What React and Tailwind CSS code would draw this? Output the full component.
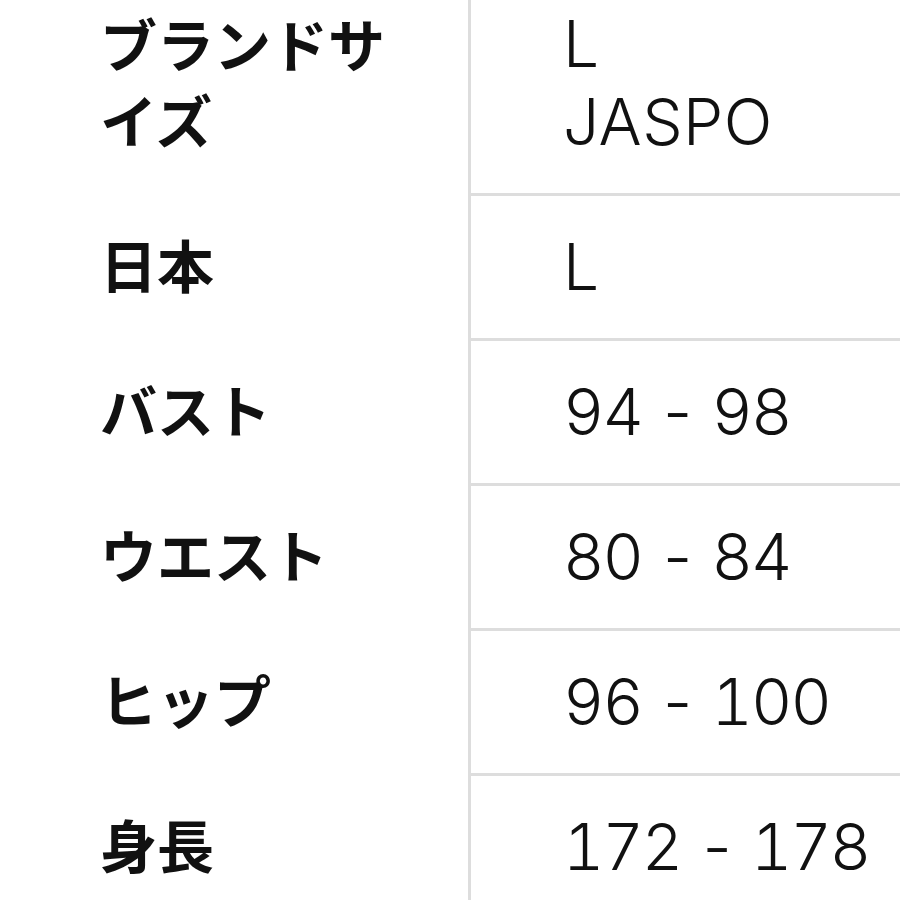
import React from "react";

const ROWS = [
  { label: "ブランドサイズ", values: ["L", "JASPO"], h: "h-[221px]" },
  { label: "日本", values: ["L"], h: "h-[145px]" },
  { label: "バスト", values: ["94 - 98"], h: "h-[145px]" },
  { label: "ウエスト", values: ["80 - 84"], h: "h-[145px]" },
  { label: "ヒップ", values: ["96 - 100"], h: "h-[145px]" },
  { label: "身長", values: ["172 - 178"], h: "h-[145px]" },
];

export default function App() {
  return (
    <div className="w-[900px] h-[900px] overflow-hidden bg-white text-[#111]">
      <div className="mt-[-28px]">
        {ROWS.map((row, i) => (
          <div key={i} className={`flex ${row.h}`}>
            {/* label */}
            <div className="w-[468px] shrink-0 flex items-center pl-[100px] pr-[40px] pb-[6px]">
              <div
                className="w-[310px] text-[57px] leading-[76px] font-bold"
                style={{ fontFamily: '"Noto Sans CJK JP", sans-serif' }}
              >
                {row.label}
              </div>
            </div>
            {/* value */}
            <div
              className={`flex-1 flex flex-col justify-center pl-[92px] border-l-[3px] border-[#dddddd] ${
                i > 0 ? "border-t-[3px]" : ""
              }`}
            >
              {row.values.map((v) => (
                <div
                  key={v}
                  className={`text-[64px] leading-[78px] font-light ${
                    /\d/.test(v) ? "tabular-nums tracking-[-2px]" : "tracking-[0.5px]"
                  }`}
                  style={{ fontFamily: 'Inter, "Noto Sans CJK JP", sans-serif' }}
                >
                  {v}
                </div>
              ))}
            </div>
          </div>
        ))}
      </div>
    </div>
  );
}
